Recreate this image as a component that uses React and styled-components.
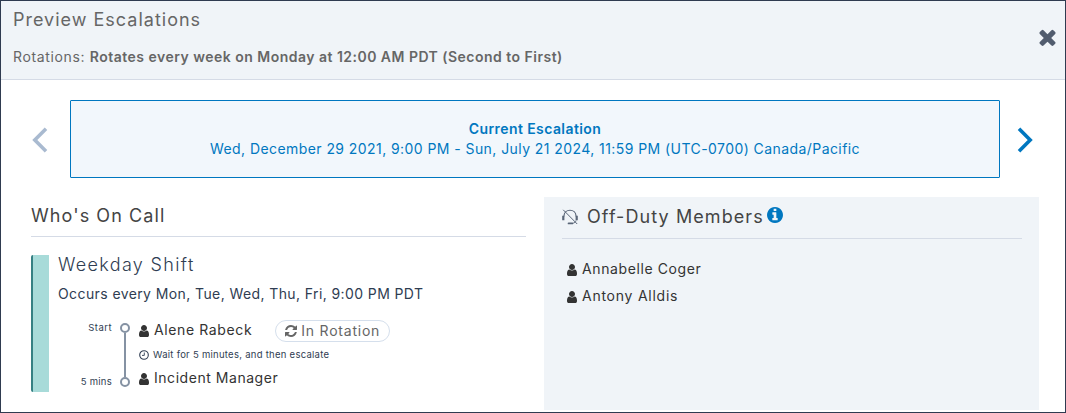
import React from 'react';
import styled, { createGlobalStyle } from 'styled-components';

const icons = {
	times:
		'M1490 1322q0 40-28 68l-136 136q-28 28-68 28t-68-28l-294-294-294 294q-28 28-68 28t-68-28l-136-136q-28-28-28-68t28-68l294-294-294-294q-28-28-28-68t28-68l136-136q28-28 68-28t68 28l294 294 294-294q28-28 68-28t68 28l136 136q28 28 28 68t-28 68l-294 294 294 294q28 28 28 68z',
	user:
		'M1536 1399q0 109-62.5 187t-150.5 78h-854q-88 0-150.5-78t-62.5-187q0-85 8.5-160.5t31.5-152 58.5-131 94-89 134.5-34.5q131 128 313 128t313-128q76 0 134.5 34.5t94 89 58.5 131 31.5 152 8.5 160.5zm-256-887q0 159-112.5 271.5t-271.5 112.5-271.5-112.5-112.5-271.5 112.5-271.5 271.5-112.5 271.5 112.5 112.5 271.5z',
	refresh:
		'M1639 1056q0 5-1 7-64 268-268 434.5t-478 166.5q-146 0-282.5-55t-243.5-157l-129 129q-19 19-45 19t-45-19-19-45v-448q0-26 19-45t45-19h448q26 0 45 19t19 45-19 45l-137 137q71 66 161 102t187 36q134 0 250-65t186-179q11-17 53-117 8-23 30-23h192q13 0 22.5 9.5t9.5 22.5zm25-800v448q0 26-19 45t-45 19h-448q-26 0-45-19t-19-45 19-45l138-138q-148-137-349-137-134 0-250 65t-186 179q-11 17-53 117-8 23-30 23h-199q-13 0-22.5-9.5t-9.5-22.5v-7q65-268 270-434.5t480-166.5q146 0 284 55.5t245 156.5l130-129q19-19 45-19t45 19 19 45z',
	info:
		'M1152 1376v-160q0-14-9-23t-23-9h-96v-512q0-14-9-23t-23-9h-320q-14 0-23 9t-9 23v160q0 14 9 23t23 9h96v320h-96q-14 0-23 9t-9 23v160q0 14 9 23t23 9h448q14 0 23-9t9-23zm-128-896v-160q0-14-9-23t-23-9h-192q-14 0-23 9t-9 23v160q0 14 9 23t23 9h192q14 0 23-9t9-23zm640 416q0 209-103 385.5t-279.5 279.5-385.5 103-385.5-103-279.5-279.5-103-385.5 103-385.5 279.5-279.5 385.5-103 385.5 103 279.5 279.5 103 385.5z',
};

const Icon = ({ name, size, box = '128 128 1536 1536', className }) => (
	<svg className={className} width={size} height={size} viewBox={box} fill="currentColor">
		<path d={icons[name]} />
	</svg>
);

const HeadsetOff = () => (
	<svg width="16" height="16" viewBox="0 0 16 16" fill="none" stroke="#5a6678">
		<path d="M2 7.5V6.6C2.2 3.4 4.8 1.3 8 1.3s5.8 2.1 6 5.3v.9" strokeWidth="1.1" />
		<path d="M1.3 6.8v4.4M14.7 6.8v4.4" strokeWidth="2.2" />
		<path d="M14 11.5c-.3 1.6-1.6 2.6-3.6 2.8" strokeWidth="1" />
		<path d="M6.6 14.4h3.6" strokeWidth="1.9" strokeLinecap="round" />
		<path d="M1.2.8l14 14.2" strokeWidth="1" />
	</svg>
);

const Chevron = ({ points }) => (
	<svg width="16" height="26" viewBox="0 0 16 26" fill="none" stroke="currentColor" strokeWidth="3.6">
		<polyline points={points} />
	</svg>
);

const Clock = () => (
	<svg width="10" height="10" viewBox="0 0 10 10" fill="none" stroke="currentColor">
		<circle cx="5" cy="5" r="4.3" strokeWidth="1.1" />
		<path d="M5.3 2.5v2.9H3" strokeWidth="0.9" />
	</svg>
);

const Person = ({ name, spacing, children }) => (
	<PersonRow>
		<PersonIcon name="user" size={12} />
		<Text spacing={spacing}>{name}</Text>
		{children}
	</PersonRow>
);

const offDuty = [{ name: 'Annabelle Coger', spacing: 0.61 }, { name: 'Antony Alldis', spacing: 0.75 }];

export default function App() {
	return (
		<Modal>
			<GlobalStyle />
			<Header>
				<div>
					<Title>Preview Escalations</Title>
					<Rotations>
						<Text spacing={0.65}>Rotations: </Text>
						<strong>Rotates every week on Monday at 12:00 AM PDT (Second to First)</strong>
					</Rotations>
				</div>
				<Close aria-label="Close">
					<Icon name="times" size={17} box="302 302 1188 1252" />
				</Close>
			</Header>
			<Carousel>
				<Arrow disabled aria-label="Previous">
					<Chevron points="14,1.8 2.8,13 14,24.2" />
				</Arrow>
				<Current>
					<strong>Current Escalation</strong>
					<span>Wed, December 29 2021, 9:00 PM - Sun, July 21 2024, 11:59 PM (UTC-0700) Canada/Pacific</span>
				</Current>
				<Arrow aria-label="Next">
					<Chevron points="2,1.8 13.2,13 2,24.2" />
				</Arrow>
			</Carousel>
			<Columns>
				<OnCall>
					<OnCallHeading>Who's On Call</OnCallHeading>
					<Shift>
						<ShiftName>Weekday Shift</ShiftName>
						<Occurs>Occurs every Mon, Tue, Wed, Thu, Fri, 9:00 PM PDT</Occurs>
						<Timeline>
							<Times>
								<Text spacing={0.45}>Start</Text>
								<Text spacing={0.25}>5 mins</Text>
							</Times>
							<Track>
								<Dot />
								<Stem />
								<Dot />
							</Track>
							<Steps>
								<Person name="Alene Rabeck" spacing={0.62}>
									<Pill>
										<Icon name="refresh" size={12} />
										<Text spacing={0.78}>In Rotation</Text>
									</Pill>
								</Person>
								<Wait>
									<Clock />
									<span>Wait for 5 minutes, and then escalate</span>
								</Wait>
								<Person name="Incident Manager" spacing={0.54} />
							</Steps>
						</Timeline>
					</Shift>
				</OnCall>
				<OffDuty>
					<OffDutyHeading>
						<HeadsetOff />
						<span>Off-Duty Members</span>
						<InfoIcon name="info" size={16} />
					</OffDutyHeading>
					<Members>
						{offDuty.map(member => (
							<Person key={member.name} {...member} />
						))}
					</Members>
				</OffDuty>
			</Columns>
		</Modal>
	);
}

const GlobalStyle = createGlobalStyle`
	* {
		box-sizing: border-box;
	}
	body {
		margin: 0;
		overflow: hidden;
		font-family: Inter, "Liberation Sans", sans-serif;
	}
	svg {
		display: block;
		flex: none;
	}
`;

const Modal = styled.div`
	width: 1066px;
	height: 413px;
	border: 1px solid #2f3b50;
	background: #fff;
	font-size: 14px;
	line-height: 20px;
	color: #333;
	white-space: nowrap;
`;

const Text = styled.span.withConfig({ shouldForwardProp: p => p !== 'spacing' })`
	letter-spacing: ${props => props.spacing}px;
`;

const Header = styled.div`
	display: flex;
	justify-content: space-between;
	height: 79px;
	padding: 7px 9px 0 12px;
	background: #f0f4f8;
	border-bottom: 1px solid #d5dbe6;
	color: #666;
`;

const Title = styled.h1`
	margin: 0;
	font-size: 18px;
	font-weight: 400;
	line-height: 24px;
	letter-spacing: 1px;
`;

const Rotations = styled.div`
	margin-top: 15px;
	white-space: pre;

	strong {
		font-weight: 600;
		letter-spacing: 0.48px;
	}
`;

const Close = styled.button`
	align-self: flex-start;
	margin: 21px 0 0;
	padding: 0;
	border: 0;
	background: none;
	color: #515c6e;
`;

const Carousel = styled.div`
	display: flex;
	align-items: center;
	padding: 20px 0 0 31px;
`;

const Arrow = styled.button`
	padding: 2px 0 0;
	border: 0;
	background: none;
	color: ${props => (props.disabled ? '#a9bad0' : '#0077c0')};
`;

const Current = styled.div`
	display: flex;
	flex-direction: column;
	align-items: center;
	justify-content: center;
	width: 930px;
	height: 78px;
	margin: 0 17px 0 22px;
	border: 1px solid #0077c0;
	border-radius: 1px;
	background: #f2f7fc;
	color: #0077c0;
	letter-spacing: 0.43px;

	strong {
		font-weight: 600;
		letter-spacing: 0.42px;
	}
`;

const Columns = styled.div`
	display: grid;
	grid-template-columns: 495px 495px;
	gap: 18px;
	margin: 19px 0 0 30px;
	height: 213px;
`;

const OnCall = styled.div`
	color: #444;
`;

const OnCallHeading = styled.h2`
	height: 40px;
	margin: 0;
	padding-top: 6px;
	border-bottom: 1px solid #d5dbe6;
	font-size: 18px;
	font-weight: 400;
	line-height: 26px;
	letter-spacing: 1.08px;
`;

const Shift = styled.div`
	height: 137px;
	margin-top: 18px;
	padding-left: 25px;
	border-left: 2px solid #358083;
	border-radius: 2px;
	box-shadow: inset 16px 0 #a8dbd9;
	color: #2f3d52;
`;

const ShiftName = styled.h3`
	margin: 0;
	font-size: 18px;
	font-weight: 300;
	line-height: 20px;
	letter-spacing: 1.33px;
`;

const Occurs = styled.div`
	margin-top: 9px;
	letter-spacing: 0.4px;
`;

const Timeline = styled.div`
	display: flex;
	padding-top: 14px;
`;

const Times = styled.div`
	display: flex;
	flex-direction: column;
	justify-content: space-between;
	align-items: flex-end;
	width: 54px;
	height: 74px;
	font-size: 9.5px;
`;

const Track = styled.div`
	display: flex;
	flex-direction: column;
	align-items: center;
	margin: 5px 8px 0;
`;

const Dot = styled.div`
	width: 10px;
	height: 10px;
	border: 2px solid #8592a3;
	border-radius: 50%;
`;

const Stem = styled.div`
	width: 2px;
	height: 44px;
	background: #8592a3;
`;

const Steps = styled.div`
	padding-top: 2px;
`;

const PersonRow = styled.div`
	display: flex;
	align-items: center;
	height: 20px;
	color: #333;
`;

const PersonIcon = styled(Icon)`
	margin: 2px 4px 0 0;
`;

const Pill = styled.span`
	display: flex;
	align-items: center;
	gap: 4px;
	width: 115px;
	height: 22px;
	margin: 2px 0 0 23px;
	padding-left: 9px;
	border: 1px solid #d5dfec;
	border-radius: 11px;
	color: #666;
`;

const Wait = styled.div`
	display: flex;
	align-items: center;
	gap: 4px;
	height: 14px;
	margin: 8px 0 6px;
	padding-left: 1px;
	font-size: 9.5px;
	line-height: 14px;
	letter-spacing: 0.27px;
`;

const OffDuty = styled.div`
	padding: 0 17px 0 18px;
	background: #f0f4f8;
	color: #444;
`;

const OffDutyHeading = styled.h2`
	display: flex;
	align-items: center;
	height: 42px;
	margin: 0;
	padding-bottom: 2px;
	border-bottom: 1px solid #d5dbe6;
	font-size: 18px;
	font-weight: 400;
	letter-spacing: 1.08px;

	span {
		margin-left: 9px;
	}
`;

const InfoIcon = styled(Icon)`
	margin: 0 0 3px 3px;
	color: #0077c0;
`;

const Members = styled.div`
	display: flex;
	flex-direction: column;
	gap: 7px;
	padding: 20px 0 0 4px;
`;
